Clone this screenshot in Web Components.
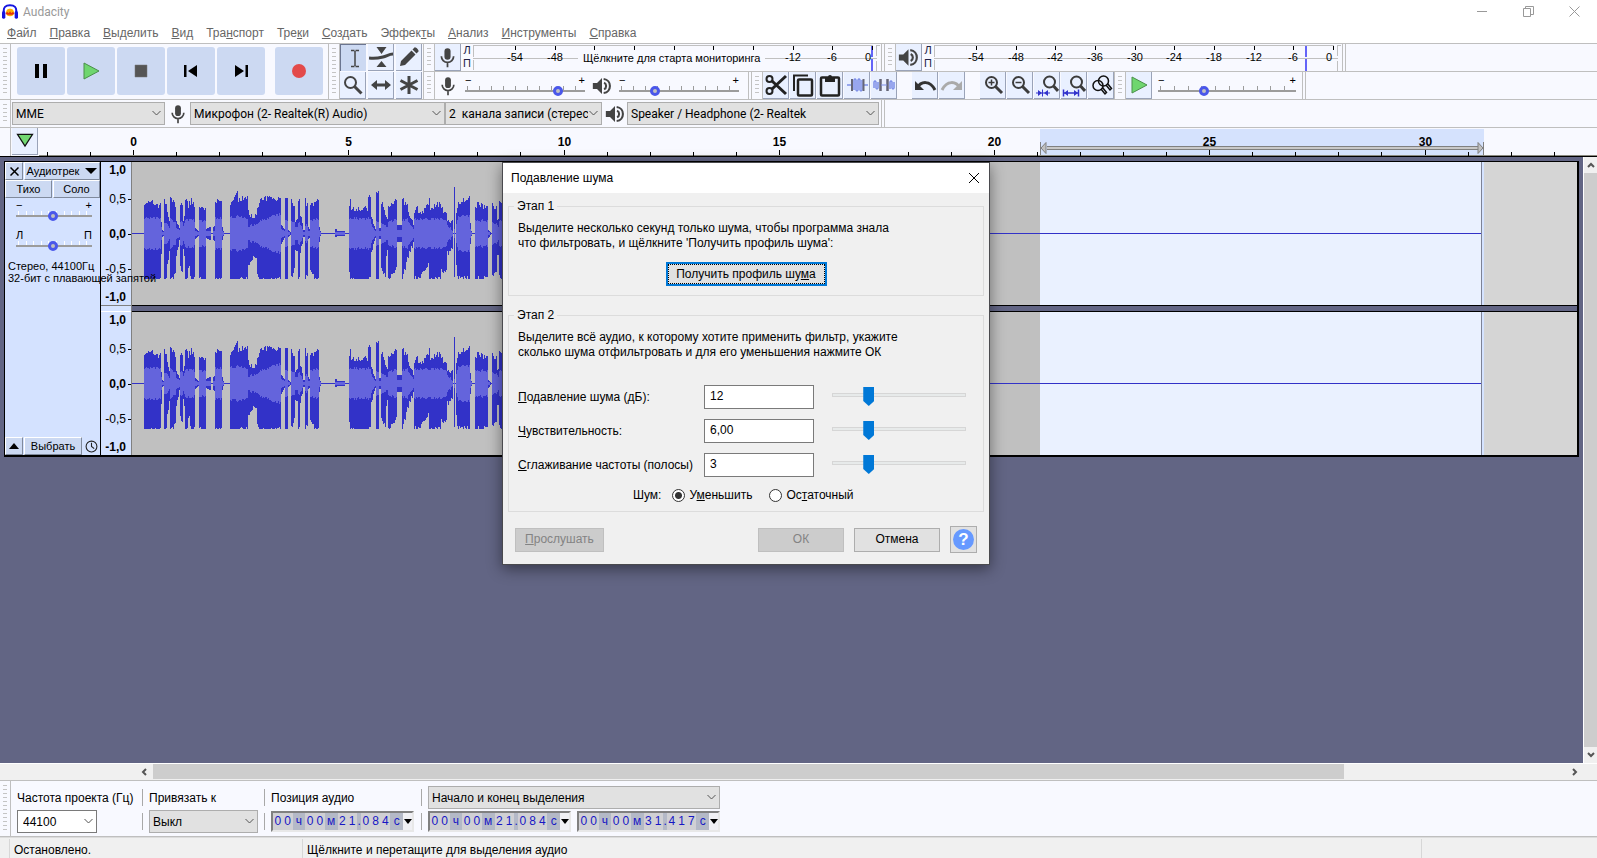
<!DOCTYPE html>
<html lang="ru">
<head>
<meta charset="utf-8">
<title>Audacity</title>
<style>
html, body { height: 100%; margin: 0; }
body { overflow: hidden; font: 12px/16px "Liberation Sans", Arial, sans-serif; color: #000; }
</style>
</head>
<body>
<audacity-app></audacity-app>

<template id="app">
  <style>
    :host { display: flex; flex-direction: column; height: 100vh; position: relative; background: #f8f9ff; }
    .dock { border-top: 1px solid #bfbfbf; flex: none; }
    .band { display: flex; height: 55px; border-bottom: 1px solid #bfbfbf; }
    .stack { flex: 1; display: flex; flex-direction: column; }
    .line { display: flex; height: 27px; }
    .line + .line { border-top: 1px solid #bfbfbf; }
    .single { border-bottom: 1px solid #bfbfbf; }
    .end { width: 2px; border-right: 1px solid #bfbfbf; }
    .transport { display: flex; gap: 2px; padding: 3px 5px 0 6px; }
    .transport .rec { margin-left: 8px; }
    .tools { display: grid; grid-template-columns: repeat(3, 26px); gap: 1px 2px; padding-right: 1px; }
    .group { display: flex; gap: 1px; }
    .group + .group { margin-left: 15px; }
    .lp { width: 12px; font-size: 11px; line-height: 13px; text-align: center; color: #222244; }
    .lp span { display: block; }
    .meter { --icon: 21px; }
    .mixer { display: flex; align-items: center; padding: 0 9px 0 3px; gap: 7px; }
    .mixer tick-slider { width: 120px; }
    .speed { width: 138px; padding: 3px 6px 0; }
    .device { display: flex; align-items: center; padding: 0 2px 0 1px; font-family: Roboto, "Noto Sans", sans-serif; }
    .device aud-icon { width: 25px; }
    .work { flex: 1; display: flex; background: #626584; border-top: 1px solid #000; min-height: 0; }
    .tracks { flex: 1; min-width: 0; padding: 4px; }
    .bottom { display: flex; border-top: 1px solid #bfbfbf; border-bottom: 1px solid #bfbfbf; height: 55px; flex: none; }
    noise-dialog { position: absolute; left: 502px; top: 162px; }
  </style>
  <title-bar></title-bar>
  <menu-bar></menu-bar>
  <div class="dock">
    <div class="band">
      <tool-bar>
        <div class="transport">
          <tool-button big icon="pause" label="Пауза"></tool-button>
          <tool-button big icon="play" label="Воспроизвести"></tool-button>
          <tool-button big icon="stop" label="Стоп"></tool-button>
          <tool-button big icon="start" label="В начало"></tool-button>
          <tool-button big icon="end" label="В конец"></tool-button>
          <tool-button big icon="record" label="Запись" class="rec"></tool-button>
        </div>
      </tool-bar>
      <tool-bar>
        <div class="tools">
          <tool-button pressed icon="ibeam" label="Выделение"></tool-button>
          <tool-button icon="envelope" label="Огибающая"></tool-button>
          <tool-button icon="pencil" label="Карандаш"></tool-button>
          <tool-button icon="zoom" label="Масштаб"></tool-button>
          <tool-button icon="shift" label="Перемещение"></tool-button>
          <tool-button icon="multi" label="Мультиинструмент"></tool-button>
        </div>
      </tool-bar>
      <div class="stack">
        <div class="line">
          <tool-bar>
            <tool-button class="meter" icon="mic" label="Индикатор записи"></tool-button>
            <div class="lp"><span>Л</span><span>П</span></div>
            <level-meter hint="Щёлкните для старта мониторинга" peak="399"></level-meter>
          </tool-bar>
          <tool-bar ruled>
            <tool-button class="meter" icon="speaker" label="Индикатор воспроизведения"></tool-button>
            <div class="lp"><span>Л</span><span>П</span></div>
            <level-meter peak="372"></level-meter>
          </tool-bar>
          <div class="end"></div>
        </div>
        <div class="line">
          <tool-bar>
            <div class="mixer">
              <aud-icon name="mic"></aud-icon>
              <tick-slider low="−" high="+" value="80" label="Уровень записи"></tick-slider>
              <aud-icon name="speaker"></aud-icon>
              <tick-slider low="−" high="+" value="28" label="Уровень воспроизведения"></tick-slider>
            </div>
          </tool-bar>
          <tool-bar ruled>
            <div class="group">
              <tool-button icon="cut" label="Вырезать"></tool-button>
              <tool-button icon="copy" label="Копировать"></tool-button>
              <tool-button icon="paste" label="Вставить"></tool-button>
              <tool-button icon="trim" label="Обрезать"></tool-button>
              <tool-button icon="silence" label="Тишина"></tool-button>
            </div>
            <div class="group">
              <tool-button icon="undo" label="Отменить"></tool-button>
              <tool-button icon="redo" label="Повторить"></tool-button>
            </div>
            <div class="group">
              <tool-button icon="zoomin" label="Приблизить"></tool-button>
              <tool-button icon="zoomout" label="Отдалить"></tool-button>
              <tool-button icon="zoomsel" label="По выделению"></tool-button>
              <tool-button icon="zoomfit" label="По ширине"></tool-button>
              <tool-button icon="zoomtoggle" label="Переключить масштаб"></tool-button>
            </div>
          </tool-bar>
          <tool-bar>
            <tool-button icon="play" label="Воспроизвести на скорости"></tool-button>
            <tick-slider class="speed" low="−" high="+" value="32" label="Скорость"></tick-slider>
          </tool-bar>
          <div class="end"></div>
        </div>
      </div>
    </div>
    <div class="line single">
      <tool-bar>
        <div class="device">
          <drop-down label="Аудиодрайвер" text="MME" style="width:153px"></drop-down>
          <aud-icon name="mic"></aud-icon>
          <drop-down label="Устройство записи" text="Микрофон (2- Realtek(R) Audio)" style="width:255px"></drop-down>
          <drop-down label="Каналы записи" text="2&nbsp; канала записи (стерес" style="width:157px"></drop-down>
          <aud-icon name="speaker"></aud-icon>
          <drop-down label="Устройство воспроизведения" text="Speaker / Headphone (2- Realtek" style="width:252px"></drop-down>
        </div>
      </tool-bar>
      <div class="end"></div>
    </div>
    <time-ruler></time-ruler>
  </div>
  <div class="work">
    <div class="tracks"><audio-track></audio-track></div>
    <scroll-bar vertical></scroll-bar>
  </div>
  <scroll-bar></scroll-bar>
  <div class="bottom">
    <tool-bar open><selection-bar></selection-bar></tool-bar>
  </div>
  <status-bar></status-bar>
  <noise-dialog></noise-dialog>
</template>

<script>
const ARIAL = '"Liberation Sans", Arial, sans-serif';

/* Registers an element whose shadow root is built from its host. */
function element(name, render) {
  customElements.define(name, class extends HTMLElement {
    connectedCallback() {
      if (this.shadowRoot) return;
      const root = this.attachShadow({ mode: 'open' });
      const t = document.createElement('template');
      t.innerHTML = render(this);
      root.append(t.content.cloneNode(true));
    }
  });
}

const LENS = '<circle cx="10.5" cy="9.5" r="5.5" fill="none" stroke="#3c3c3c" stroke-width="2"/><path d="M14.5 13.5l6.500 6.500" stroke="#3c3c3c" stroke-width="3"/>';
const LENS2 = '<circle cx="14.5" cy="9" r="5.5" fill="none" stroke="#3c3c3c" stroke-width="2"/><path d="M18.5 13l4.500 5" stroke="#3c3c3c" stroke-width="3"/>';
const G = '#444';
const ICONS = {
  pause: '<path d="M6 5h4v14H6zM14 5h4v14h-4z"/>',
  play: '<path d="M5 4l15 8-15 8z" fill="#6fd66f" stroke="#4a8f4a"/>',
  stop: '<path d="M6 6h12v12H6z" fill="#555" stroke="#777" stroke-width="0.5"/>',
  start: '<path d="M5 6h2.500v12H5zM18 6v12l-9-6z"/>',
  end: '<path d="M16.500 6H19v12h-2.500zM6 6v12l9-6z"/>',
  record: '<circle cx="12" cy="12" r="7" fill="#e34a4a"/>',
  ibeam: '<path d="M9 4.500h3.500M13.500 4.500H17M9 20.500h3.500M13.500 20.500H17M13 5v15" stroke="#444" stroke-width="1.500"/>',
  envelope: `<path d="M7.500 2h10L12.500 9zM7.500 22h10l-5-6z" fill="${G}"/><path d="M0 13c6 1 10 0 14-1s6-3 10-3" fill="none" stroke="${G}" stroke-width="3"/>`,
  pencil: `<path d="M3 21l1-5L14.500 5.500l4 4L8 20zM15.500 4.500l2-2c1-1 5 3 4 4l-2 2z" fill="${G}"/>`,
  zoom: `<circle cx="9.500" cy="9.500" r="5.500" fill="none" stroke="${G}" stroke-width="2"/><path d="M13.500 13.500l7 7" stroke="${G}" stroke-width="3"/>`,
  shift: `<path d="M2 12l6-5v3.500h8V7l6 5-6 5v-3.500H8V17z" fill="${G}"/>`,
  multi: `<path d="M12 3v18M3.500 7.500l17 9M20.500 7.500l-17 9" stroke="${G}" stroke-width="3"/>`,
  mic: `<rect x="8.500" y="1.500" width="7" height="13" rx="3.500" fill="${G}"/><path d="M5 10.500a7 7 0 0 0 14 0M12 17.500V23" fill="none" stroke="${G}" stroke-width="2"/>`,
  speaker: `<path d="M1 8.500h5l6-6v19l-6-6H1z" fill="${G}"/><path d="M14.500 8a4.500 4.500 0 0 1 0 8" fill="none" stroke="${G}" stroke-width="2.500"/><path d="M14 3.500c10 1 10 16 0 17" fill="none" stroke="${G}" stroke-width="2.500"/>`,
  cut: '<g fill="none" stroke="#222"><circle cx="5.500" cy="6" r="3" stroke-width="2"/><circle cx="5.500" cy="18" r="3" stroke-width="2"/><path d="M8 8l14 13M8 16L22 3" stroke-width="3"/></g>',
  copy: '<path d="M3 18V2.500h14" fill="none" stroke="#222" stroke-width="2"/><rect x="7" y="6.500" width="14" height="16" rx="1" fill="none" stroke="#222" stroke-width="2.500"/>',
  paste: '<rect x="3" y="4.500" width="18" height="18" rx="1" fill="none" stroke="#222" stroke-width="2.500"/><path d="M7 4h3a2 2 0 0 1 4 0h3v5H7z" fill="#222"/>',
  trim: '<path d="M2 12h4M19 12h4" stroke="#7c8ee8" stroke-width="1.500"/><path d="M9 17V7q1-2 2 0v10q1 2 2 0V7q1-2 2 0v10q1 2 2 0V7" fill="none" stroke="#7c8ee8" stroke-width="1.500"/><path d="M7 6v12M18.500 6v12" stroke="#667" stroke-width="2"/>',
  silence: '<path d="M2 15V9q1-2 2 0v6q1 2 2 0V9M18 16V9q1-2 2 0v6q1 2 2 0V9" fill="none" stroke="#7c8ee8" stroke-width="1.500"/><path d="M8.500 6v12M15.500 6v12" stroke="#667" stroke-width="2.500"/><path d="M9 12h6" stroke="#7c8ee8"/>',
  undo: '<path d="M2 8v9h9z" fill="#333"/><path d="M4 15c4-7 13-8 18 2" fill="none" stroke="#333" stroke-width="3"/>',
  redo: '<path d="M22 8v9h-9z" fill="#aaa"/><path d="M20 15C16 8 7 7 2 17" fill="none" stroke="#aaa" stroke-width="3"/>',
  zoomin: LENS + '<path d="M7.500 9.500h6M10.500 6.500v6" stroke="#3c3c3c" stroke-width="1.500"/>',
  zoomout: LENS + '<path d="M7.500 9.500h6" stroke="#3c3c3c" stroke-width="1.500"/>',
  zoomsel: LENS2 + '<path d="M1 20h14M7.500 16.500v7" stroke="#3333cc"/><path d="M3 17l4 3-4 3zM13 17l-4 3 4 3z" fill="#3333cc"/>',
  zoomfit: LENS2 + '<path d="M1.500 16.500v7M16.500 16.500v7M1 20h16" stroke="#3333cc" stroke-width="1.500"/><path d="M6 17l-4 3 4 3zM12 17l4 3-4 3z" fill="#3333cc"/>',
  zoomtoggle: '<g fill="none" stroke="#111" stroke-width="1.500"><circle cx="14.500" cy="8" r="5"/><circle cx="9" cy="12.500" r="5"/><path d="M17 12l4 5 1.500-1.500-4-5M12 16l4 5 1.500-1.500-4-5"/></g>',
  pin: '<path d="M3 4h18l-9 14z" fill="#72d872" stroke="#111" stroke-width="1.500"/>',
  clock: '<g fill="none" stroke="#222" stroke-width="2"><circle cx="12" cy="12" r="10"/><path d="M12 5v7l5 4"/></g>',
  logo: '<path d="M3 14C1 4 6 2 12 2s11 2 9 12" fill="none" stroke="#1515e0" stroke-width="3"/><path d="M6 14c0-6 3-7 6-7s6 1 6 7-12 6-12 0z" fill="#ffb000"/><path d="M5 14l3-2 2 2 2-3 2 3 2-2 3 2-3 2H8z" fill="#e83010"/><rect x="0" y="11" width="5" height="11" rx="2" fill="#1515e0"/><rect x="19" y="11" width="5" height="11" rx="2" fill="#1515e0"/>'
};

element('aud-icon', h => `
  <style>
    :host { display: inline-flex; justify-content: center; align-items: center; }
    svg { width: var(--icon, 20px); height: var(--icon, 20px); display: block; }
  </style>
  <svg viewBox="0 0 24 24" aria-hidden="true">${ICONS[h.getAttribute('name')]}</svg>`);

element('tool-button', h => `
  <style>
    :host { display: block; width: 26px; height: 27px; --icon: 24px; }
    button { box-sizing: border-box; width: 100%; height: 100%; padding: 0; border: solid #9aa3b8; border-width: 0 1px 1px 0;
      background: #e9f0ff; display: flex; align-items: center; justify-content: center; }
    :host([pressed]) button { background: #ccd9f2; border-color: #6b7590; border-width: 1px 0 0 1px; }
    :host([big]) { width: 48px; height: 48px; }
    :host([big]) button { background: #ccd9f2; border: 0; border-radius: 3px; }
  </style>
  <button aria-label="${h.getAttribute('label')}"><aud-icon name="${h.getAttribute('icon')}"></aud-icon></button>`);

element('tool-bar', () => `
  <style>
    :host { display: flex; border-right: 1px solid #bfbfbf; }
    :host([ruled]) { margin-left: 2px; border-left: 1px solid #bfbfbf; }
    :host([open]) { border-right: 0; }
    .grip { width: 10px; border-right: 1px solid #bfbfbf; display: flex; justify-content: center; }
    .grip i { width: 4px; margin: 4px 0 3px; background: repeating-linear-gradient(#c4c4c4 0 1px, transparent 1px 4px); }
  </style>
  <div class="grip"><i></i></div><slot></slot>`);

element('tick-slider', h => `
  <style>
    :host { display: block; font: 11px/10px ${ARIAL}; }
    .ends { display: flex; justify-content: space-between; height: 9px; color: inherit; }
    input { -webkit-appearance: none; appearance: none; display: block; width: 100%; height: 12px; margin: 0;
      --tick: var(--tick-color, #9c9c9c);
      background:
        linear-gradient(#9c9c9c, #9c9c9c) 0 6px / 100% 2px no-repeat,
        repeating-linear-gradient(90deg, var(--tick) 0 1px, transparent 1px 10%) 2px 2px / 100% 4px no-repeat; }
    input::-webkit-slider-thumb { -webkit-appearance: none; box-sizing: border-box; width: 10px; height: 10px; border-radius: 5px;
      margin-top: 1px; border: 3px solid #4a57ea; background: #c0c0c0; }
  </style>
  <div class="ends"><span>${h.getAttribute('low')}</span><span>${h.getAttribute('high')}</span></div>
  <input type="range" min="0" max="100" value="${h.getAttribute('value')}" aria-label="${h.getAttribute('label')}">`);

element('drop-down', h => `
  <style>
    :host { display: block; position: relative; height: 23px; }
    select { -webkit-appearance: none; appearance: none; box-sizing: border-box; width: 100%; height: 100%; margin: 0;
      padding: 0 13px 0 3px; border: 1px solid #adadad; border-radius: 0; background: #e1e1e1; font: inherit; color: #000;
      text-overflow: clip; }
    :host([edit]) select { background: #fff; border-color: #7a7a7a; padding-left: 5px; }
    svg { position: absolute; right: 4px; top: 8px; width: 9px; height: 7px; pointer-events: none; }
  </style>
  <select aria-label="${h.getAttribute('label')}"><option>${h.getAttribute('text')}</option></select>
  <svg viewBox="0 0 9 7"><path d="M0.500 1l4 4 4-4" fill="none" stroke="#555"/></svg>`);

element('title-bar', () => `
  <style>
    :host { display: flex; height: 23px; flex: none; background: #fff; color: #999; align-items: center; font-family: Roboto, "Noto Sans", sans-serif; }
    aud-icon { --icon: 16px; margin: 0 5px 0 2px; }
    .name { flex: 1; }
    button { width: 46px; height: 21px; border: 0; background: none; padding: 0; display: flex; justify-content: center; align-items: center; }
  </style>
  <aud-icon name="logo"></aud-icon><span class="name">Audacity</span>
  <button aria-label="Свернуть"><svg width="11" height="11"><path d="M0 5.500h10" stroke="#999"/></svg></button>
  <button aria-label="Развернуть"><svg width="11" height="11"><path d="M0.500 2.500h7v8h-7zM2.500 2.500v-2h8v8h-3" fill="none" stroke="#999"/></svg></button>
  <button aria-label="Закрыть"><svg width="11" height="11"><path d="M0.500 0.500l10 10M10.500 0.500l-10 10" stroke="#999"/></svg></button>`);

element('menu-bar', () => `
  <style>
    :host { display: flex; height: 20px; flex: none; background: #fff; }
    button { border: 0; background: none; padding: 0 6px 0 7px; font: inherit; color: #666; }
  </style>` +
  ['<u>Ф</u>айл', '<u>П</u>равка', '<u>В</u>ыделить', '<u>В</u>ид', 'Тра<u>н</u>спорт', 'Тре<u>к</u>и', '<u>С</u>оздать',
   'Эффек<u>т</u>ы', '<u>А</u>нализ', '<u>И</u>нструменты', '<u>С</u>правка'].map(t => `<button>${t}</button>`).join(''));

/* dB scale from -54 to 0; the hint lies over the middle of the scale. */
element('level-meter', h => {
  const hint = h.getAttribute('hint'), peak = +h.getAttribute('peak');
  let s = '';
  for (let i = 0; i < 10; i++) {
    const x = Math.round(42 + i * 357 / 9), db = -54 + i * 6;
    s += `<path d="M${x}.5 2v4" stroke="#000"/>`;
    if (!hint || i < 2 || i > 6) s += `<text x="${db ? x : x - 4}" y="17" text-anchor="middle">${db}</text>`;
  }
  return `
  <style>
    :host { display: block; position: relative; width: 408px; height: 27px; font: 11px/14px ${ARIAL}; }
    svg { display: block; width: 100%; height: 100%; }
    .hint { position: absolute; left: 105px; top: 6px; padding: 1px 5px; background: #f8f9ff; white-space: nowrap; }
  </style>
  <svg>
    <path d="M0 14.500h404M0.500 1v12M0.500 16v10M403.500 1v11M403.500 17v10M404 1.500h3M0 1.500h400" stroke="#c0c0c0" fill="none"/>
    <path d="M${peak} 2v11M${peak} 15v12" stroke="#6464f8" stroke-width="2"/>
    ${s}
  </svg>${hint ? `<div class="hint">${hint}</div>` : ''}`;
});

element('time-ruler', () => {
  const zero = 94, step = 43.05;
  let s = '';
  for (let i = -2; i <= 34; i++) {
    const x = Math.round(zero + i * step) + 0.5, major = i >= 0 && i % 5 === 0;
    s += `<path d="M${x} ${major ? 22 : 24}v5" stroke="#000"/>`;
    if (major) s += `<text x="${x}" y="18" text-anchor="middle">${i}</text>`;
  }
  return `
  <style>
    :host { display: flex; height: 28px; }
    .grip { width: 10px; border-right: 1px solid #bfbfbf; margin-right: 1px; }
    svg { flex: 1; height: 28px; margin-left: 1px; font: bold 12px ${ARIAL}; }
    tool-button { --icon: 20px; }
  </style>
  <div class="grip"></div>
  <tool-button icon="pin" label="Закреплённая головка"></tool-button>
  <svg>
    <rect x="1001" y="1" width="444" height="26" fill="#d5e2fd"/>
    <path d="M1008 18.500h431M1008 21.500h431" stroke="#808080"/><path d="M1008 20h431" stroke="#c8c8c8" stroke-width="2"/>
    <path d="M1001.500 14v13M1444.500 14v13" stroke="#808080"/>
    <path d="M1002 20l5-5.500v11zM1444 20l-5-5.500v11z" fill="#c0c0c0" stroke="#808080"/>
    <path d="M0 27.500h1600" stroke="#8a8a80"/>
    ${s}
  </svg>`;
});

/* Bursts of the recording: x0, x1, peak up at both ends, peak down at both ends, RMS at both ends. */
const BURSTS = [
  [12,29,31,28,45,45,15,15],[29,30,12,6,18,6,6,3],[30,32,3,2,3,2,1,1],[32,35,31,29,45,44,11,10],[35,38,20,11,30,16,8,5],
  [38,44,35,28,45,40,15,10],[44,48,14,5,20,6,5,3],[48,51,30,26,28,38,10,12],[51,53,14,16,16,22,8,9],[53,56,33,30,45,45,14,14],
  [56,59,28,30,30,38,12,14],[59,63,34,26,45,45,15,12],[63,67,5,2,5,2,2,1],[67,74,23,25,45,45,12,12],[74,79,4,6,4,6,2,2],
  [81,83,6,7,6,7,2,2],[83,90,30,32,45,45,15,14],[90,92,6,2,6,2,2,1],
  [98,105,30,38,45,45,16,16],[105,107,40,34,45,45,17,17],[107,116,34,35,45,44,17,15],[116,125,20,16,30,20,7,8],
  [125,128,24,30,38,45,9,11],[128,138,33,35,45,45,12,15],[138,149,37,34,45,45,16,19],[149,153,8,4,10,4,4,2],
  [153,156,36,34,43,42,12,12],[156,159,3,1,3,1,1,0],[159,163,36,25,44,34,12,10],[163,166,14,13,14,14,6,6],
  [166,168,34,32,42,42,10,10],[168,171,15,12,16,10,7,5],[171,173,3,3,3,3,1,1],[173,176,32,28,44,38,8,8],[176,178,6,4,5,4,2,2],
  [178,187,30,31,38,45,13,14],[187,189,6,2,8,2,3,1],[203,205,4,4,3,3,1,1],[205,213,2,2,2,2,1,1],
  [217,219,26,34,36,45,14,15],[219,236,25,24,45,45,15,14],[236,239,34,38,45,45,15,14],[239,244,14,4,16,4,8,2],[244,247,41,41,45,45,12,12],
  [247,249,5,5,5,5,2,2],[249,254,30,20,32,43,10,8],[254,256,14,15,20,16,6,6],[256,265,28,32,45,34,12,13],[265,270,8,8,8,8,3,3],
  [270,276,33,27,44,24,12,14],[276,282,20,8,22,8,10,4],[282,286,22,26,43,45,14,14],[286,297,19,27,44,30,14,14],
  [297,298,38,38,45,45,14,14],[298,309,25,30,45,44,14,14],[309,315,24,20,36,34,14,13],[315,321,14,12,18,14,7,3],
  [322,323,44,44,45,45,4,4],[324,326,18,24,28,40,8,12],[326,338,32,34,43,42,17,17],[338,340,10,2,10,2,4,1],
  [343,347,26,30,44,44,12,13],[347,356,26,28,45,42,13,12],[356,359,3,1,4,1,1,0],[360,365,28,24,42,34,11,10],[365,367,15,15,20,20,7,7],
  [367,400,33,28,42,42,13,12]
];

function wavePaths() {
  let seed = 7, peak = '', rms = '';
  const rnd = () => (seed = (seed * 16807) % 2147483647) / 2147483647;
  for (const [a, b, u0, u1, d0, d1, r0, r1] of BURSTS) {
    for (let x = a; x < b; x++) {
      const t = b - a > 1 ? (x - a) / (b - a - 1) : 0;
      let u = u0 + (u1 - u0) * t, d = d0 + (d1 - d0) * t;
      if (u > 10) u += Math.round((rnd() - 0.5) * 6);
      if (d > 10) d = Math.min(45, d + Math.round((rnd() - 0.3) * 6));
      const r = Math.round(r0 + (r1 - r0) * t + (r0 > 6 ? (rnd() - 0.5) * 3 : 0));
      u = Math.round(u); d = Math.round(d);
      peak += `M${x} ${71 - u}h1v${u + d + 1}h-1z`;
      if (r) rms += `M${x} ${71 - r}h1v${2 * r + 1}h-1z`;
    }
  }
  return { peak, rms };
}

element('wave-channel', () => {
  const w = wavePaths();
  return `
  <style>:host { display: block; height: 143px; background: #d5d5d5; } svg { display: block; width: 100%; height: 100%; }</style>
  <svg shape-rendering="crispEdges">
    <rect width="908" height="143" fill="#c0c0c0"/>
    <rect x="908" width="444" height="143" fill="#d5e3ff"/>
    <rect x="908" width="441" height="143" fill="#eaf1ff"/>
    <rect x="1349" width="1" height="143" fill="#7d8296"/>
    <rect y="71" width="1349" height="1" fill="#3232c8"/>
    <path d="${w.peak}" fill="#3232c8"/><path d="${w.rms}" fill="#6464dc"/>
  </svg>`;
});

element('amp-ruler', () => `
  <style>
    :host { display: grid; grid-template-rows: 16px 42px 27px 44px 12px; align-items: center; height: 143px; text-align: right; font: 12px/14px ${ARIAL}; }
    span { padding-right: 5px; position: relative; }
    .t::after { content: ""; position: absolute; right: 0; top: 7px; width: 3px; height: 1px; background: #000; }
    b { font-weight: bold; }
  </style>
  <span><b>1,0</b></span><span class="t">0,5</span><span class="t"><b>0,0</b></span><span class="t">-0,5</span><span><b>-1,0</b></span>`);

element('audio-track', () => `
  <style>
    :host { display: flex; border: solid #000; border-width: 1px 2px 2px 1px; background: #d4e2ff; font: 11px/12px ${ARIAL}; }
    .panel { width: 95px; border-right: 1px solid #000; display: flex; flex-direction: column; position: relative; z-index: 1; }
    .row { display: flex; gap: 1px; height: 18px; }
    button { box-sizing: border-box; height: 18px; padding: 0; margin: 0; border: 1px solid; border-color: #fff #808a9c #808a9c #fff; background: #ccd9f2;
      font: inherit; color: #000; display: flex; align-items: center; justify-content: center; }
    .sq { width: 18px; } .grow { flex: 1; }
    .name { gap: 6px; }
    tick-slider { width: 76px; margin: 2px 0 0 11px; height: 28px; --tick-color: #fff; }
    .info { margin: 2px 0 0 3px; white-space: nowrap; }
    .info span { display: block; }
    .foot { margin-top: auto; align-items: center; }
    .foot .grow { flex: none; width: 58px; }
    .foot aud-icon { --icon: 13px; width: 17px; }
    .amp { width: 30px; border-right: 1px solid #808080; }
    .amp hr { margin: 0; height: 5px; border: solid; border-width: 1px 0; border-color: #808080 #808080 #fff; }
    .waves { flex: 1; min-width: 0; }
    .gap { height: 5px; border: solid #000; border-width: 1px 0; background: #626584; }
  </style>
  <div class="panel">
    <div class="row">
      <button class="sq" aria-label="Закрыть"><svg width="9" height="9"><path d="M0.500 0.500l8 8M8.500 0.500l-8 8" stroke="#000" stroke-width="1.500"/></svg></button>
      <button class="grow name">Аудиотрек<svg width="12" height="6"><path d="M0 0h12l-6 6z"/></svg></button>
    </div>
    <div class="row"><button class="grow">Тихо</button><button class="grow">Соло</button></div>
    <tick-slider low="−" high="+" value="49" label="Усиление"></tick-slider>
    <tick-slider low="Л" high="П" value="49" label="Панорама"></tick-slider>
    <div class="info"><span>Стерео, 44100Гц</span><span>32-бит с плавающей запятой</span></div>
    <div class="row foot">
      <button class="sq" aria-label="Свернуть"><svg width="10" height="6"><path d="M0 6h10l-5-6z"/></svg></button>
      <button class="grow">Выбрать</button>
      <aud-icon name="clock"></aud-icon>
    </div>
  </div>
  <div class="amp"><amp-ruler></amp-ruler><hr><amp-ruler></amp-ruler></div>
  <div class="waves"><wave-channel></wave-channel><div class="gap"></div><wave-channel></wave-channel></div>`);

element('scroll-bar', h => {
  const v = h.hasAttribute('vertical');
  const arrow = d => `<button aria-label="Прокрутить"><svg width="8" height="8"><path d="${d}" fill="none" stroke="#555" stroke-width="2"/></svg></button>`;
  return `
  <style>
    :host { display: flex; flex: none; background: #f0f0f0; }
    :host([vertical]) { flex-direction: column; width: 13px; border-left: 1px solid #fff; }
    :host(:not([vertical])) { height: 15px; padding: 0 13px 1px 135px; border-top: 1px solid #fff; }
    button { flex: none; width: ${v ? '13px' : '18px'}; height: ${v ? '16px' : '15px'}; padding: 0; border: 0; background: none; display: flex; align-items: center; justify-content: center; }
    .rail { flex: 1; display: flex; } .rail i { background: #cdcdcd; width: ${v ? '100%' : 'calc(84% + 4px)'}; }
  </style>` + (v ? arrow('M1 6l3-3 3 3') : arrow('M6 1L3 4l3 3')) +
  '<div class="rail"><i></i></div>' + (v ? arrow('M1 2l3 3 3-3') : arrow('M2 1l3 3-3 3'));
});

element('time-field', h => `
  <style>
    :host { display: flex; box-sizing: border-box; width: 143px; height: 21px; border: 2px solid; border-color: #808080 #e8e8e8 #e8e8e8 #808080;
      background: #b4b9c7; color: #1717c4; font: 12px/17px ${ARIAL}; text-align: center; }
    span { flex: 10 0 0; } .d { background: #d0d0d4; } .p { flex-grow: 4; } .u { flex-grow: 13; }
    button { width: 9px; border: 0; padding: 0; background: #f0f0f4; display: flex; align-items: center; justify-content: center; }
  </style>` +
  [...h.getAttribute('value')].map(c => `<span class="${/\d/.test(c) ? 'd' : c === '.' ? 'p' : 'u'}">${c}</span>`).join('') +
  '<button aria-label="Формат"><svg width="8" height="5"><path d="M0 0h8l-4 5z"/></svg></button>');

element('selection-bar', () => `
  <style>
    :host { display: flex; padding: 5px 0 0 6px; font: 12px/16px ${ARIAL}; }
    .col { display: grid; grid-template-rows: 23px 23px; gap: 1px; align-items: center; align-content: start; padding-right: 6px; }
    .bar + .col { padding-left: 6px; }
    .bar { display: grid; grid-template-rows: 17px 17px; gap: 7px; padding-top: 3px; align-content: start; }
    .bar i { width: 1px; background: #a8a8a8; }
    .sel { display: flex; gap: 6px; }
    .rate { width: 80px; }
  </style>
  <div class="col" style="width:119px"><span>Частота проекта (Гц)</span><drop-down edit class="rate" label="Частота проекта" text="44100"></drop-down></div>
  <div class="bar"><i></i><i></i></div>
  <div class="col" style="width:109px"><span>Привязать к</span><drop-down label="Привязать к" text="Выкл"></drop-down></div>
  <div class="bar"><i></i><i></i></div>
  <div class="col" style="width:144px"><span>Позиция аудио</span><time-field value="00ч00м21.084с"></time-field></div>
  <div class="bar"><i></i><i></i></div>
  <div class="col"><drop-down label="Выделение" text="Начало и конец выделения"></drop-down>
    <div class="sel"><time-field value="00ч00м21.084с"></time-field><time-field value="00ч00м31.417с"></time-field></div></div>`);

element('status-bar', () => `
  <style>
    :host { display: flex; flex: none; height: 20px; border-top: 1px solid #dcdcdc; background: #f0f0f0; line-height: 22px; padding-left: 9px; }
    span { border-left: 1px solid #d7d7d7; padding-left: 4px; margin-top: 1px; }
    .state { width: 288px; } .hint { flex: 1; } .last { width: 171px; }
  </style>
  <span class="state">Остановлено.</span><span class="hint">Щёлкните и перетащите для выделения аудио</span><span class="last"></span>`);

element('param-row', h => `
  <style>
    :host { display: grid; grid-template-columns: 186px 110px 1fr; align-items: center; height: 24px; }
    .box { box-sizing: border-box; width: 110px; height: 24px; border: 1px solid #7a7a7a; padding: 0 5px 2px; font: inherit; background: #fff; }
    .range { -webkit-appearance: none; appearance: none; width: 134px; height: 20px; margin: 0 0 4px 18px; background: none; }
    .range::-webkit-slider-runnable-track { box-sizing: border-box; height: 4px; border: 1px solid #d6d6d6; background: #e7eaea; }
    .range::-webkit-slider-thumb { -webkit-appearance: none; width: 11px; height: 19px; margin-top: -7px; background: #0078d7;
      clip-path: polygon(0 0, 100% 0, 100% 14px, 50% 100%, 0 14px); }
  </style>
  <label for="v"><slot></slot></label>
  <input id="v" class="box" type="text" value="${h.getAttribute('value')}">
  <input class="range" type="range" min="0" max="100" value="25" aria-label="${h.textContent}">`);

element('noise-dialog', () => `
  <style>
    :host { display: block; box-sizing: border-box; width: 488px; border: 1px solid #4a4a4e; background: #f0f0f0;
      box-shadow: 0 4px 14px rgba(0, 0, 0, .45); z-index: 5; line-height: 15px; }
    header { height: 30px; background: #fff; display: flex; align-items: center; justify-content: space-between; padding: 0 9px 0 8px; }
    button { box-sizing: border-box; height: 24px; margin: 0; border: 1px solid #adadad; background: #e1e1e1; font: inherit; color: #000; padding: 0; }
    button:disabled { background: #ccc; border-color: #bfbfbf; color: #838383; }
    header button { width: 12px; height: 12px; border: 0; background: none; display: flex; }
    .body { padding: 5px 5px 11px; }
    fieldset { margin: 0 0 11px; padding: 7px 9px 9px; border: 1px solid #dcdcdc; min-width: 0; }
    legend { padding: 0 3px; margin-left: -4px; line-height: 16px; }
    p { margin: 0; white-space: nowrap; }
    .profile { display: block; width: 161px; margin: 11px auto 0; border: 2px solid #0078d7; outline: 1px dotted #000; outline-offset: -3px; }
    .rows { display: grid; gap: 10px; margin-top: 25px; }
    .noise { display: flex; align-items: center; height: 16px; margin: 10px 0 0 115px; }
    .noise label { display: flex; align-items: center; gap: 4px; margin-right: 17px; white-space: nowrap; }
    .noise > span { margin-right: 11px; }
    .noise input { -webkit-appearance: none; appearance: none; box-sizing: border-box; width: 13px; height: 13px; margin: 0; border: 1px solid #333; border-radius: 50%; background: #fff; }
    .noise input:checked { background: radial-gradient(circle, #333 0 3px, #fff 4px); }
    .two { margin-bottom: 14px; padding-bottom: 8px; }
    footer { display: flex; align-items: center; gap: 10px; padding: 0 7px; }
    footer button { width: 86px; } footer .pre { width: 89px; margin-right: auto; }
    footer .help { width: 27px; height: 27px; display: flex; align-items: center; justify-content: center; }
    .help span { width: 21px; height: 21px; border-radius: 50%; background: #6699ff; color: #fff; font: bold 17px/21px ${ARIAL}; }
  </style>
  <header><span>Подавление шума</span><button aria-label="Закрыть"><svg width="12" height="12"><path d="M1 1l10 10M11 1L1 11" stroke="#000"/></svg></button></header>
  <div class="body">
    <fieldset><legend>Этап 1</legend>
      <p>Выделите несколько секунд только шума, чтобы программа знала</p>
      <p>что фильтровать, и щёлкните 'Получить профиль шума':</p>
      <button class="profile">Получить профиль шу<u>м</u>а</button>
    </fieldset>
    <fieldset class="two"><legend>Этап 2</legend>
      <p>Выделите всё аудио, к которому хотите применить фильтр, укажите</p>
      <p>сколько шума отфильтровать и для его уменьшения нажмите ОК</p>
      <div class="rows">
        <param-row value="12"><u>П</u>одавление шума (дБ):</param-row>
        <param-row value="6,00"><u>Ч</u>увствительность:</param-row>
        <param-row value="3"><u>С</u>глаживание частоты (полосы)</param-row>
      </div>
      <div class="noise"><span>Шум:</span>
        <label><input type="radio" name="n" checked><span>У<u>м</u>еньшить</span></label>
        <label><input type="radio" name="n"><span>Ос<u>т</u>аточный</span></label>
      </div>
    </fieldset>
    <footer>
      <button class="pre" disabled><u>П</u>рослушать</button>
      <button disabled>ОК</button><button>Отмена</button>
      <button class="help" aria-label="Справка"><span>?</span></button>
    </footer>
  </div>`);

element('audacity-app', () => document.getElementById('app').innerHTML);
</script>
</body>
</html>
